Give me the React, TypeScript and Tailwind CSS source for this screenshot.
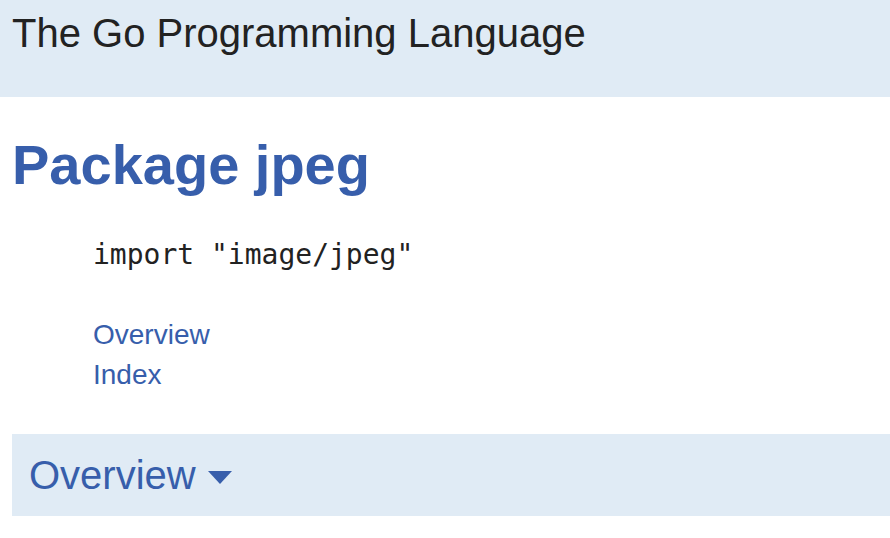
const LINK = "text-[#375eab]";

export default function App() {
  return (
    <div className="w-[890px] h-[538px] overflow-hidden bg-white font-['Liberation_Sans',Arial,sans-serif]">
      <header className="h-[97px] bg-[#e0ebf5] px-3 pt-[10px]">
        <h1 className="text-[40px] leading-[46px] text-[#222222]">The Go Programming Language</h1>
      </header>

      <main className="pl-3">
        <h2 className={`mt-[36px] text-[56px] leading-[64px] font-bold ${LINK}`}>Package jpeg</h2>

        <div className="mt-[42px] pl-[81px]">
          <code className="block font-['DejaVu_Sans_Mono',monospace] text-[28px] leading-[32px] text-[#222222]">
            import "image/jpeg"
          </code>
          <ul className="mt-[44px] text-[28px] leading-[40px]">
            <li>
              <a href="#" className={LINK}>Overview</a>
            </li>
            <li>
              <a href="#" className={LINK}>Index</a>
            </li>
          </ul>
        </div>

        <section className="mt-[39px] h-[82px] bg-[#e0ebf5] pl-[17px] pt-[18px]">
          <h2 className={`flex items-center text-[40px] leading-[46px] ${LINK}`}>
            Overview
            <svg width="24" height="13" viewBox="0 0 24 13" className="ml-[12px] mt-[4px]">
              <path d="M0 0h24L12 13z" fill="#375eab" />
            </svg>
          </h2>
        </section>
      </main>
    </div>
  );
}
